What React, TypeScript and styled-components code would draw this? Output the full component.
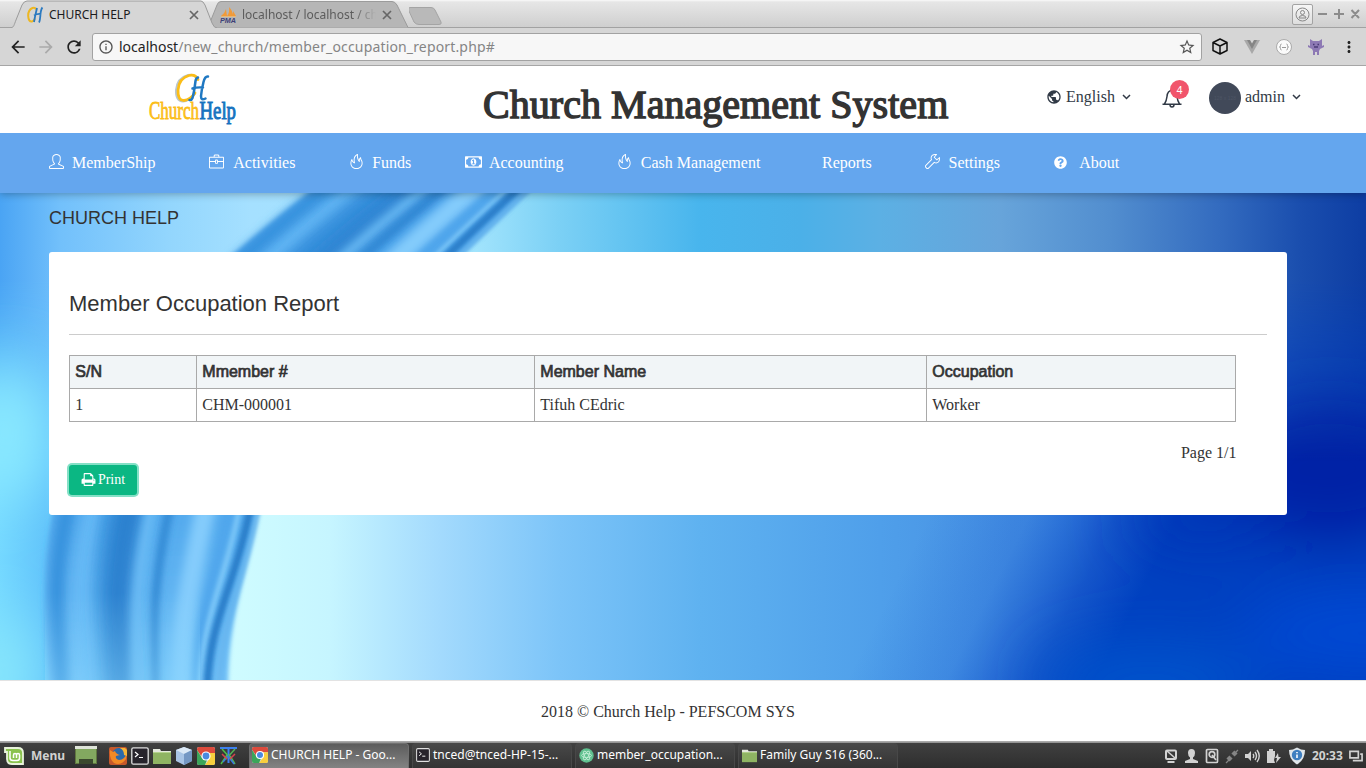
import React from "react";
import styled, { createGlobalStyle, css } from "styled-components";
import { SlFire, SlBriefcase, SlWrench, SlUser } from "react-icons/sl";
import { FaQuestionCircle } from "react-icons/fa";
import { MdPublic, MdArrowBack, MdArrowForward, MdRefresh, MdStarBorder, MdInfoOutline, MdMoreVert } from "react-icons/md";

const serif = `"Liberation Serif", "Times New Roman", serif`;
const sans = `"Liberation Sans", Arial, sans-serif`;
const ui = `"Noto Sans", sans-serif`;

const GlobalStyle = createGlobalStyle`
  * { box-sizing: border-box; }
  body { margin: 0; background: #fff; overflow: hidden; }
  svg { display: block; flex: none; }
`;

const Screen = styled.div`
  width: 1366px;
  height: 768px;
  display: flex;
  flex-direction: column;
  overflow: hidden;
  color: #313a46;
  font: 16px/24px ${serif};
`;

/* ---------- browser window ---------- */

const TabStrip = styled.div`
  height: 28px;
  display: flex;
  padding-left: 11px;
  background: linear-gradient(#fafafa 0, #e6e6e6 2px, #cfcfcf 27px, #a2a2a2 27px);
  font: 12px/16px ${ui};
`;

const Tab = styled.div<{ $active?: boolean }>`
  display: grid;
  width: ${(p) => (p.$active ? 206 : 201)}px;
  height: 28px;
  margin-left: ${(p) => (p.$active ? 0 : -9)}px;
  z-index: ${(p) => (p.$active ? 1 : 0)};
  color: ${(p) => (p.$active ? "#1c1c1c" : "#5c5c5c")};
  > * {
    grid-area: 1 / 1;
  }
`;

const TabContent = styled.div<{ $left: number }>`
  display: flex;
  align-items: center;
  padding: 2px 0 0 ${(p) => p.$left}px;
`;

const TabLabel = styled.span<{ $fade?: boolean }>`
  width: 140px;
  margin-left: 5px;
  overflow: hidden;
  white-space: nowrap;
  ${(p) => p.$fade && css`mask-image: linear-gradient(90deg, #000 112px, transparent 134px);`}
`;

const WindowControls = styled.div`
  display: flex;
  align-items: center;
  gap: 5px;
  margin: 0 6px 0 auto;
`;

const ProfileButton = styled.div`
  width: 21px;
  height: 21px;
  border: 1px solid #a3a3a3;
  border-radius: 2px;
  background: linear-gradient(#f6f6f6, #dedede);
  display: grid;
  place-items: center;
`;

const Toolbar = styled.div`
  height: 38px;
  display: flex;
  align-items: center;
  padding: 0 8px 0 8px;
  background: #d6d6d6;
  border-bottom: 1px solid #a6a6a6;
  color: #222;
`;

const NavButtons = styled.div`
  display: flex;
  align-items: center;
  gap: 8px;
  width: 84px;
`;

const AddressBar = styled.div`
  width: 1110px;
  height: 28px;
  display: flex;
  align-items: center;
  padding: 0 5px;
  background: #f7f7f7;
  border: 1px solid #a2a2a2;
  border-radius: 3px;
  font: 14px/20px ${ui};
  color: #222;
`;

const Url = styled.span`
  flex: 1;
  margin-left: 5px;
`;

const UrlPath = styled.span`
  color: #858585;
  letter-spacing: 0.155px;
`;

const Extensions = styled.div`
  display: flex;
  align-items: center;
  gap: 16px;
  margin-left: 10px;
`;

/* ---------- page ---------- */

const Header = styled.header`
  height: 67px;
  display: flex;
  background: #fff;
  color: #313a46;
`;

const LogoBox = styled.div`
  width: 483px;
  padding: 6px 0 0 147px;
`;

const Brand = styled.h1`
  width: 563px;
  margin: 0;
  padding-top: 13px;
  font: 400 40px/52px ${serif};
  letter-spacing: 0.04px;
  color: #333;
  -webkit-text-stroke: 1.4px #333;
  white-space: nowrap;
`;

const HeaderItem = styled.div<{ $w: number; $gap?: number }>`
  width: ${(p) => p.$w}px;
  height: 62px;
  display: flex;
  align-items: center;
  gap: ${(p) => p.$gap ?? 4}px;
  white-space: nowrap;
`;

const BellBox = styled.div`
  display: grid;
  width: 30px;
  height: 34px;
  > * {
    grid-area: 1 / 1;
  }
`;

const Badge = styled.span`
  width: 19px;
  height: 19px;
  margin: 0 0 0 8px;
  border-radius: 50%;
  background: #f1556c;
  color: #fff;
  text-align: center;
  font: 11px/20px ${sans};
`;

const Avatar = styled.div`
  width: 32px;
  height: 32px;
  margin-top: 2px;
  border-radius: 50%;
  background: #414959;
  color: #4d5565;
  text-align: center;
  font: 5px/33px ${sans};
`;

const NavBar = styled.nav`
  height: 60px;
  display: flex;
  gap: 53.7px;
  padding-left: 49px;
  background: #64a6ee;
  color: #fff;
  box-shadow: 0 1px 8px rgba(0, 0, 0, 0.3);
  clip-path: inset(0 0 -14px 0);
  z-index: 1;
`;

const NavItem = styled.a`
  height: 59px;
  display: flex;
  align-items: center;
  white-space: nowrap;
`;

const NavIcon = styled.span<{ $w: number; $solid?: boolean }>`
  width: ${(p) => p.$w}px;
  margin-top: ${(p) => (p.$solid ? -1 : -3)}px;
`;

const Stage = styled.main`
  height: 487px;
  display: grid;
  overflow: hidden;
  > * {
    grid-area: 1 / 1;
  }
`;

const StageContent = styled.div`
  padding: 13px 79px 0 49px;
  z-index: 0;
`;

const PageTitle = styled.h4`
  margin: 0 0 22px;
  font: 400 18px/24px ${sans};
  color: #333;
`;

const Card = styled.section`
  height: 263px;
  padding: 36px 20px 0;
  background: #fff;
  border-radius: 3px;
`;

const CardTitle = styled.h3`
  margin: 0;
  height: 47px;
  font: 400 22px/31px ${sans};
  color: #333;
  border-bottom: 1px solid #ccc;
`;

const Report = styled.div`
  width: 1167px;
  padding-top: 20px;
`;

const Table = styled.table`
  width: 1167px;
  table-layout: fixed;
  border-collapse: collapse;
  color: #333;
  th,
  td {
    height: 33px;
    padding: 0 5.3px;
    border: 1px solid #a9a9a9;
    text-align: left;
    line-height: 24px;
  }
  th {
    background: #f1f5f7;
    font: 400 16px/24px ${sans};
    -webkit-text-stroke: 0.7px #333;
  }
`;

const PageCount = styled.div`
  margin: 19px -0.5px 0 0;
  text-align: right;
  color: #333;
`;

const PrintButton = styled.button`
  width: 68px;
  height: 30px;
  padding: 0 0 1px;
  display: flex;
  align-items: center;
  justify-content: center;
  gap: 2px;
  border: 0;
  border-radius: 3px;
  background: #0bb783;
  box-shadow: 0 0 0 2px #84e0c6;
  color: #fff;
  font: 14px/21px ${serif};
`;

const Footer = styled.footer`
  height: 61px;
  border-top: 1px solid #e3e3e3;
  padding: 19px 30px 0 0;
  text-align: center;
  background: #fff;
  color: #333;
`;

/* ---------- desktop panel ---------- */

const Panel = styled.div`
  height: 27px;
  display: flex;
  padding: 2px 0 0 4px;
  background: linear-gradient(#9f9f9f 0, #b4b4b4 1px, #777 2px, #404040 2px, #2e2e2e 100%);
  font: 12px/16px ${ui};
  color: #fff;
`;

const PanelGroup = styled.div<{ $gap: number; $w?: number }>`
  display: flex;
  align-items: center;
  gap: ${(p) => p.$gap}px;
  ${(p) => p.$w && css`width: ${p.$w}px;`}
`;

const MenuLabel = styled.span`
  width: 38px;
  margin-left: 1px;
  font-weight: 700;
  color: #d2d2d2;
`;

const Task = styled.div<{ $active?: boolean }>`
  width: 160px;
  height: 25px;
  display: flex;
  align-items: center;
  gap: 3px;
  padding: 0 0 2px ${(p) => (p.$active ? 2 : 3)}px;
  border: 1px solid ${(p) => (p.$active ? "#707070" : "#484848")};
  border-bottom: 0;
  border-radius: 4px 4px 0 0;
  background: ${(p) => (p.$active ? "linear-gradient(#5c5c5c, #838383)" : "linear-gradient(#484848, #343434)")};
  white-space: nowrap;
`;

const Tray = styled.div`
  display: flex;
  align-items: center;
  gap: 6px;
  margin: 0 3px 0 auto;
  color: #d2d2d2;
`;

const Clock = styled.span`
  width: 31px;
  font-weight: 700;
  white-space: nowrap;
`;

/* ---------- drawings ---------- */

const TabShape = ({ active }: { active?: boolean }) => (
  <svg width={active ? 206 : 201} height="28">
    {active ? (
      <path d="M0 28C3 27 3 25 5 20L11 5Q13 1 16 1H190Q192 1 194 5L201 23Q203 28 206 28" fill="#d6d6d6" stroke="#9b9b9b" />
    ) : (
      <path d="M0 27.5L9 5Q10 1.500 13 1.500H184Q187 1.500 189 5L200 27.500" fill="#b6b6b6" stroke="#9b9b9b" />
    )}
  </svg>
);

const CloseIcon = () => (
  <svg width="10" height="10" viewBox="0 0 10 10">
    <path d="M1 1L9 9M9 1L1 9" stroke="#666" strokeWidth="1.700" />
  </svg>
);

const Favicon = () => (
  <svg width="17" height="18" viewBox="0 0 17 18" fill="none">
    <path d="M9 3.500Q8 1 5.500 2Q1 4 1.200 10Q1.500 16 5 15.500Q7 15 8 12.500" stroke="#edb722" strokeWidth="2" />
    <path d="M10 2Q8 10 7 16M15.500 1.500Q14 3 13.500 8Q13 15 12 16.500M7 9.500Q10 7.500 14 8" stroke="#2a79c0" strokeWidth="1.800" />
  </svg>
);

const PmaIcon = () => (
  <svg width="17" height="16" viewBox="0 0 17 16">
    <path d="M1 9Q5 6 6 2L7 9ZM7 9Q10 5 9 0Q13 4 13 9ZM13 4L16 9H13Z" fill="#f19a38" />
    <path d="M1 9.500H16" stroke="#e7b87a" />
    <text x="0" y="15.500" fontSize="6.500" fontWeight="700" fontStyle="italic" fontFamily="Liberation Sans" textLength="16" lengthAdjust="spacingAndGlyphs" fill="#3d4078">PMA</text>
  </svg>
);

const ChurchLogo = () => (
  <svg width="92" height="56" viewBox="147 72 92 56" overflow="visible" fontFamily="Liberation Serif">
    <g fill="none" strokeLinecap="round">
      <path d="M197 79Q194 73.500 188 75Q177 78 176 90Q175.500 101 183 101.500Q189 101.500 195 94" stroke="#b9c6cf" strokeWidth="2" />
      <path d="M198 79.500Q195.500 74 189 75.500Q179 78 178 90Q177.500 100.500 184 100.500Q190 100 195 93" stroke="#fbbd17" strokeWidth="2.800" />
      <path d="M198 77.500Q196 78 195.500 81Q194 93 192.500 98Q191.500 100.500 189.500 100M208 76.500Q205 76 203.500 82Q201.500 90 201 96Q201 101 205.500 98.500M192.500 88.500Q197 87 203 87.500" stroke="#1f78c2" strokeWidth="2.500" />
    </g>
    <g fontSize="25">
      <text x="149" y="119" textLength="50" lengthAdjust="spacingAndGlyphs" fill="#fbbd17" stroke="#fbbd17" strokeWidth=".8">Church</text>
      <text x="199.500" y="118.500" textLength="36.500" lengthAdjust="spacingAndGlyphs" fill="#1673c0" stroke="#1673c0" strokeWidth="1">Help</text>
    </g>
  </svg>
);

const Chevron = () => (
  <svg width="9" height="6" viewBox="0 0 9 6">
    <path d="M1 1L4.500 4.500L8 1" fill="none" stroke="#313a46" strokeWidth="1.500" />
  </svg>
);

const BellIcon = () => (
  <svg width="20" height="22" viewBox="0 0 20 22" fill="none" stroke="#313a46" strokeWidth="1.500">
    <path d="M.500 17.200H19.500M2.500 17Q4.500 14 5 9.500Q5.500 3.500 10 3.500Q14.500 3.500 15 9.500Q15.500 14 17.500 17M8 17.500Q8 20 10 20Q12 20 12 17.500M10 1.500V3.500" />
  </svg>
);

const MoneyIcon = () => (
  <svg width="17" height="16" viewBox="0 0 1920 1792" fill="#fff">
    <path d="M768 1152h384v-96h-128v-448h-114l-148 137 77 80q42-37 55-57h2v288h-128v96zm512-256q0 70-21 142t-59.500 134-101.500 101-138 39-138-39-101.500-101-59.500-134-21-142 21-142 59.500-134 101.500-101 138-39 138 39 101.500 101 59.500 134 21 142zm512 256v-512q-106 0-181-75t-75-181h-1152q0 106-75 181t-181 75v512q106 0 181 75t75 181h1152q0-106 75-181t181-75zm128-832v1152q0 26-19 45t-45 19h-1792q-26 0-45-19t-19-45v-1152q0-26 19-45t45-19h1792q26 0 45 19t19 45z" />
  </svg>
);

const PrintIcon = () => (
  <svg width="15" height="15" viewBox="0 0 1792 1792" fill="#fff">
    <path d="M448 1536h896v-256h-896v256zm0-640h896v-384h-160q-40 0-68-28t-28-68v-160h-640v640zm1152 64q0-26-19-45t-45-19-45 19-19 45 19 45 45 19 45-19 19-45zm128 0v416q0 13-9.500 22.500t-22.500 9.500h-224v160q0 40-28 68t-68 28h-960q-40 0-68-28t-28-68v-160h-224q-13 0-22.500-9.500t-9.500-22.500v-416q0-79 56.500-135.500t135.500-56.500h64v-544q0-40 28-68t68-28h672q40 0 88 20t76 48l152 152q28 28 48 76t20 88v256h64q79 0 135.500 56.500t56.500 135.500z" />
  </svg>
);

const stops = (list: [number, string][]) =>
  list.map(([x, c], i) => <stop key={i} offset={x / 1366} stopColor={c} />);

/* curve through x at the top, at the lower edge of the card and at the bottom */
const curve = (top: number, mid: number, low: number, dx: number) =>
  `M${top} -30C${top - dx} 118 ${mid + 17} 240 ${mid} 322S${low - 2} 430 ${low} 520`;

const ribbons: { at: [number, number, number, number]; c: string; w: number; blur: number; o?: number }[] = [
  { at: [362, 66, 62, 205], c: "#3793de", w: 16, blur: 5 },
  { at: [390, 92, 90, 205], c: "#6bbdf8", w: 12, blur: 6 },
  { at: [425, 122, 118, 200], c: "#2f88d6", w: 30, blur: 9, o: 0.8 },
  { at: [456, 130, 124, 200], c: "#2173c4", w: 22, blur: 9, o: 0.7 },
  { at: [458, 150, 138, 195], c: "#6fc0f8", w: 9, blur: 5 },
  { at: [476, 168, 156, 190], c: "#2f86d2", w: 9, blur: 3, o: 0.85 },
  { at: [506, 204, 182, 180], c: "#84ccfc", w: 20, blur: 5 },
  { at: [528, 228, 196, 172], c: "#4fa6ec", w: 9, blur: 3 },
  { at: [537, 238, 200, 168], c: "#83ccfa", w: 4, blur: 2 },
  { at: [547, 249, 207, 164], c: "#2b7fca", w: 8, blur: 2 },
  { at: [557, 257, 219, 161], c: "#69b6ee", w: 4, blur: 2 },
];

const Backdrop = () => (
  <svg width="1366" height="488" viewBox="0 0 1366 488">
    <defs>
      <linearGradient id="low">
        {stops([[0, "#74d8ff"], [45, "#62c4fb"], [230, "#cffcff"], [330, "#c6f5ff"], [440, "#a3dafd"], [560, "#7cc4f8"], [700, "#5fb2f0"], [880, "#4f9fea"], [1010, "#4790e2"], [1366, "#3f86de"]])}
      </linearGradient>
      <linearGradient id="high">
        {stops([[0, "#4aa4f4"], [60, "#72c0fb"], [170, "#93d6fd"], [250, "#a5e0ff"], [470, "#a4e5fd"], [560, "#7bd0f5"], [700, "#48b5ed"], [800, "#4bb0e8"], [880, "#5cb0e4"], [1000, "#67a4da"], [1110, "#528ecf"], [1220, "#336bbf"], [1300, "#1a4eae"], [1366, "#0d3da3"]])}
      </linearGradient>
      <linearGradient id="night" gradientUnits="userSpaceOnUse" x1="925" y1="330" x2="1125" y2="430">
        <stop offset="0" stopColor="#0a4fce" stopOpacity="0" />
        <stop offset=".4" stopColor="#0a4fce" stopOpacity=".2" />
        <stop offset=".75" stopColor="#0747c4" stopOpacity=".78" />
        <stop offset="1" stopColor="#0040c0" />
      </linearGradient>
      <linearGradient id="fade" x2="0" y2="1">
        <stop offset=".18" stopColor="#fff" />
        <stop offset=".55" stopColor="#000" />
      </linearGradient>
      <linearGradient id="ribbon" x2="0" y2="1">
        <stop offset="0" stopColor="#4a9fe8" />
        <stop offset=".65" stopColor="#55abee" />
        <stop offset="1" stopColor="#73c2f8" />
      </linearGradient>
      <linearGradient id="haze" x2="0" y2="1">
        <stop offset=".82" stopColor="#8fdcff" stopOpacity="0" />
        <stop offset="1" stopColor="#8fdcff" stopOpacity=".4" />
      </linearGradient>
      <mask id="top"><rect width="1366" height="488" fill="url(#fade)" /></mask>
      {[2, 3, 5, 6, 9, 30].map((n) => (
        <filter key={n} id={`soft${n}`} x="-50%" y="-50%" width="200%" height="200%">
          <feGaussianBlur stdDeviation={n} />
        </filter>
      ))}
    </defs>
    <rect width="1366" height="488" fill="url(#low)" />
    <rect width="1366" height="488" fill="url(#night)" />
    <g filter="url(#soft30)">
      <ellipse cx="1330" cy="275" rx="110" ry="80" fill="#0020a6" />
      <ellipse cx="1200" cy="325" rx="70" ry="30" fill="#0034b6" />
      <ellipse cx="1370" cy="440" rx="130" ry="40" fill="#004ad4" />
      <ellipse cx="1150" cy="490" rx="110" ry="40" fill="#0052cc" />
    </g>
    <rect width="1366" height="488" fill="url(#high)" mask="url(#top)" />
    <g filter="url(#soft30)">
      <ellipse cx="5" cy="240" rx="45" ry="70" fill="#8cebff" />
      <ellipse cx="0" cy="480" rx="35" ry="60" fill="#8ae8fb" />
    </g>
    <path
      d="M560 -30C400 118 275 240 258 322S226 430 228 520L52 520Q38 400 52 322C90 210 160 105 350 -30Z"
      fill="url(#ribbon)"
      filter="url(#soft2)"
    />
    {ribbons.map((r, i) => (
      <path key={i} d={curve(...r.at)} fill="none" stroke={r.c} strokeWidth={r.w} opacity={r.o} filter={`url(#soft${r.blur})`} />
    ))}
    <rect x="45" width="155" height="488" fill="url(#haze)" />
  </svg>
);

const ChromeIcon = ({ s = 18 }: { s?: number }) => (
  <svg width={s} height={s} viewBox="0 0 18 18">
    <rect width="18" height="18" rx="2" fill="#ddd" />
    <path d="M0 2Q0 0 2 0H16Q18 0 18 2V6H9L5 10L0 3Z" fill="#dc4a3c" />
    <path d="M18 6V16Q18 18 16 18H8L13 11V6Z" fill="#f8cf3e" />
    <path d="M0 3L5 11L10 13L8 18H2Q0 18 0 16Z" fill="#3ba55a" />
    <circle cx="9" cy="9" r="4.600" fill="#fff" />
    <circle cx="9" cy="9" r="3.400" fill="#4a8ae0" />
  </svg>
);

const TerminalIcon = ({ s = 18 }: { s?: number }) => (
  <svg width={s} height={s} viewBox="0 0 18 18">
    <rect x=".8" y=".8" width="16.400" height="16.400" rx="1.500" fill="#26232b" stroke="#e0e0e0" strokeWidth="1.300" />
    <path d="M4 5L7 7.500L4 10M8 10.500H12" fill="none" stroke="#fff" strokeWidth="1.200" />
  </svg>
);

const FolderIcon = ({ s = 18 }: { s?: number }) => (
  <svg width={s} height={s} viewBox="0 0 18 18">
    <path d="M0 2H7L8 4H18V8H0Z" fill="#e4e8dd" />
    <rect y="5" width="18" height="12" fill="#8fb463" />
    <path d="M0 5.500H18" stroke="#b4d28e" />
  </svg>
);

const MintIcon = () => (
  <svg width="20" height="20" viewBox="0 0 20 20">
    <path d="M1 2H14Q19 2 19 7V18H8Q3 18 3 13V6H1Z" fill="#8bc34f" stroke="#e9f3dc" strokeWidth="1.800" />
    <path d="M6 5V12Q6 14.500 9 14.500H13Q15.500 14.500 15.500 12V9Q15.500 7.500 14 7.500T12.500 9V12M12.500 9Q12.500 7.500 11 7.500T9.500 9V12" fill="none" stroke="#fff" strokeWidth="1.500" />
  </svg>
);

const DesktopIcon = () => (
  <svg width="22" height="19" viewBox="0 0 22 19">
    <rect x=".5" y=".5" width="21" height="17" fill="#83a860" stroke="#60783f" />
    <rect width="22" height="3" fill="#dfe4da" />
    <rect x="4" y="13" width="14" height="5" fill="#3b482d" />
  </svg>
);

const FirefoxIcon = () => (
  <svg width="18" height="18" viewBox="0 0 18 18">
    <rect width="18" height="18" rx="2" fill="#c6582b" />
    <circle cx="10" cy="8" r="7" fill="#2a6aab" />
    <path d="M1 3Q0 12 5 16Q12 19 17 12L18 5Q16 13 10 13Q6 12 7 9L11 8Q7 7 6 4L4 5Z" fill="#f18a26" />
    <path d="M11 1Q15 3 15 8L18 9V3L16 1Z" fill="#f5b63a" />
  </svg>
);

const CubeIcon = () => (
  <svg width="18" height="18" viewBox="0 0 18 18">
    <path d="M9 0L17 3V14L9 18L1 14V3Z" fill="#a9c5e6" />
    <path d="M9 0L17 3L9 7L1 3Z" fill="#dce9f6" />
    <path d="M9 7L17 3V14L9 18Z" fill="#7598c4" />
  </svg>
);

const CrossIcon = () => (
  <svg width="19" height="20" viewBox="0 0 19 20" fill="none" strokeWidth="1.500">
    <path d="M1 2H18M9.500 2V17" stroke="#3d80f0" strokeWidth="2" />
    <path d="M3 3L12 13M8 9L2 18" stroke="#4ec04a" />
    <path d="M16 3L7 13M11 10L16 18" stroke="#52b356" />
    <path d="M4 16L9 10L15 18" stroke="#3b79e0" />
    <path d="M3 8L8 13M16 8L11 13" stroke="#d7434e" />
  </svg>
);

const AtomIcon = () => (
  <svg width="15" height="15" viewBox="0 0 15 15">
    <circle cx="7.500" cy="7.500" r="7.200" fill="#5fc08f" />
    <g fill="none" stroke="#c7efd9" strokeWidth=".8">
      <ellipse cx="7.500" cy="7.500" rx="5" ry="2" />
      <ellipse cx="7.500" cy="7.500" rx="5" ry="2" transform="rotate(60 7.500 7.500)" />
      <ellipse cx="7.500" cy="7.500" rx="5" ry="2" transform="rotate(120 7.500 7.500)" />
    </g>
  </svg>
);

const TrayIcons = () => (
  <>
    <svg width="14" height="16" viewBox="0 0 14 16" fill="none" stroke="#d2d2d2" strokeWidth="2">
      <rect x="2" y="2.500" width="10" height="8.500" rx="1" />
      <path d="M3 3L11 10" strokeWidth="1.600" />
      <path d="M3.500 14H10.500" />
    </svg>
    <svg width="15" height="16" viewBox="0 0 15 16" fill="#d2d2d2">
      <path d="M7.500 1Q11 1 11 5Q11 8 9 9.500V11L14 13V15H1V13L6 11V9.500Q4 8 4 5Q4 1 7.500 1Z" />
    </svg>
    <svg width="14" height="16" viewBox="0 0 14 16" fill="none" stroke="#d2d2d2" strokeWidth="1.700">
      <rect x="1.500" y="1.500" width="11" height="13" rx="1" />
      <circle cx="7" cy="6.500" r="2.800" />
      <path d="M7 7L11 12" />
    </svg>
    <svg width="14" height="16" viewBox="0 0 14 16" fill="none" stroke="#858585">
      <path d="M1 15L4 12M10 5L13 2" strokeWidth="1.300" />
      <path d="M3 12L6 9M8 7L11 4" strokeWidth="4.500" />
    </svg>
    <svg width="15" height="16" viewBox="0 0 15 16" fill="none" stroke="#d2d2d2" strokeWidth="1.400">
      <path d="M0 6H3L6 3V13L3 10H0Z" fill="#d2d2d2" stroke="none" />
      <path d="M8 6Q9.500 8 8 10M10 4Q13 8 10 12M12 2Q16.500 8 12 14" />
    </svg>
    <svg width="16" height="16" viewBox="0 0 16 16" fill="#d2d2d2">
      <path d="M3 1H7V3H9V8L8 12L9 15H1V3H3Z" />
      <path d="M12 5L9 10H11L10 15L15 9H12.500Z" />
    </svg>
    <svg width="18" height="18" viewBox="0 0 18 18">
      <path d="M9 .5Q13 3 17 3Q17 13 9 17.500Q1 13 1 3Q5 3 9 .5Z" fill="#e0e6ea" />
      <circle cx="9" cy="8" r="5.200" fill="#3f7fc0" />
      <path d="M9 5V6.200M9 7.500V11" stroke="#fff" strokeWidth="1.600" />
    </svg>
  </>
);

const menu: { label: string; icon?: React.ReactNode; w: number; solid?: boolean }[] = [
  { label: "MemberShip", icon: <SlUser size={15} />, w: 23 },
  { label: "Activities", icon: <SlBriefcase size={15} />, w: 24 },
  { label: "Funds", icon: <SlFire size={15} />, w: 23 },
  { label: "Accounting", icon: <MoneyIcon />, w: 24, solid: true },
  { label: "Cash Management", icon: <SlFire size={15} />, w: 23.5 },
  { label: "Reports", w: 8 },
  { label: "Settings", icon: <SlWrench size={15} />, w: 23 },
  { label: "About", icon: <FaQuestionCircle size={13} />, w: 25.5, solid: true },
];

export default function App() {
  return (
    <Screen>
      <GlobalStyle />
      <TabStrip>
        <Tab $active>
          <TabShape active />
          <TabContent $left={16}>
            <Favicon />
            <TabLabel>CHURCH HELP</TabLabel>
            <CloseIcon />
          </TabContent>
        </Tab>
        <Tab>
          <TabShape />
          <TabContent $left={12}>
            <PmaIcon />
            <TabLabel $fade>localhost / localhost / ch</TabLabel>
            <CloseIcon />
          </TabContent>
        </Tab>
        <svg width="36" height="28" viewBox="408 0 36 28">
          <path d="M409 7.500H430Q433 7.500 434 10L440 22Q441 24.500 438 24.500H418Q415 24.500 413 22L407.500 10Q407 7.500 409 7.500Z" fill="#b9b9b9" stroke="#a4a4a4" />
        </svg>
        <WindowControls>
          <ProfileButton>
            <svg width="15" height="15" viewBox="0 0 15 15" fill="none" stroke="#888">
              <circle cx="7.500" cy="7.500" r="6.500" />
              <circle cx="7.500" cy="5.500" r="2" />
              <path d="M4 11Q4 8.500 7.500 8.500T11 11Z" />
            </svg>
          </ProfileButton>
          <svg width="42" height="12" viewBox="0 0 42 12" stroke="#8c8c8c" strokeWidth="2">
            <path d="M0 6H9M16 6H26M21 1V11M33.500 2L41 10M41 2L33.500 10" />
          </svg>
        </WindowControls>
      </TabStrip>
      <Toolbar>
        <NavButtons>
          <MdArrowBack size={20} />
          <MdArrowForward size={20} color="#aaa" />
          <MdRefresh size={20} />
        </NavButtons>
        <AddressBar>
          <MdInfoOutline size={16} color="#555" />
          <Url>
            localhost<UrlPath>/new_church/member_occupation_report.php#</UrlPath>
          </Url>
          <MdStarBorder size={18} color="#555" />
        </AddressBar>
        <Extensions>
          <svg width="16" height="17" viewBox="0 0 16 17" fill="none" stroke="#111" strokeWidth="1.500" strokeLinejoin="round">
            <path d="M8 1L15 4.500V12.500L8 16L1 12.500V4.500ZM1 4.500L8 8L15 4.500M8 8V16" />
          </svg>
          <svg width="16" height="14" viewBox="0 0 16 14">
            <path d="M0 0H4L8 7L12 0H16L8 14Z" fill="#a8a8a8" />
            <path d="M3 0H6L8 3.500L10 0H13L8 9Z" fill="#858585" />
          </svg>
          <svg width="16" height="16" viewBox="0 0 16 16">
            <circle cx="8" cy="8" r="7.500" fill="#fafafa" stroke="#aaa" />
            <path d="M5.500 5Q4.500 5 4.500 6.500T3.500 8Q4.500 8 4.500 9.500T5.500 11M10.500 5Q11.500 5 11.500 6.500T12.500 8Q11.500 8 11.500 9.500T10.500 11M6 8.500H10" fill="none" stroke="#999" />
          </svg>
          <svg width="16" height="16" viewBox="0 0 16 16">
            <path d="M2 0L5 2H11L14 0V7L16 6V8L12 10L11 12V16H9V13H7V16H5V12L4 10L0 8V6L2 7Z" fill="#8d79b4" />
            <path d="M5 5.500H6.500M9.500 5.500H11M6 8H10" stroke="#4a3a75" strokeWidth="1.300" />
          </svg>
          <MdMoreVert size={18} color="#222" />
        </Extensions>
      </Toolbar>

      <Header>
        <LogoBox>
          <ChurchLogo />
        </LogoBox>
        <Brand>Church Management System</Brand>
        <HeaderItem $w={116}>
          <MdPublic size={16} />
          English
          <HeaderItem as="span" $w={16} $gap={0}>
            <svg width="3" height="1" />
            <Chevron />
          </HeaderItem>
        </HeaderItem>
        <HeaderItem $w={47}>
          <BellBox>
            <svg width="30" height="34" viewBox="0 0 30 34">
              <g transform="translate(0 7)">
                <BellIcon />
              </g>
            </svg>
            <Badge>4</Badge>
          </BellBox>
        </HeaderItem>
        <HeaderItem $w={150}>
          <Avatar>128 x 128</Avatar>
          admin
          <HeaderItem as="span" $w={16} $gap={0}>
            <svg width="3" height="1" />
            <Chevron />
          </HeaderItem>
        </HeaderItem>
      </Header>

      <NavBar>
        {menu.map((m) => (
          <NavItem key={m.label}>
            <NavIcon $w={m.w} $solid={m.solid}>{m.icon}</NavIcon>
            {m.label}
          </NavItem>
        ))}
      </NavBar>

      <Stage>
        <Backdrop />
        <StageContent>
          <PageTitle>CHURCH HELP</PageTitle>
          <Card>
            <CardTitle>Member Occupation Report</CardTitle>
            <Report>
              <Table>
                <colgroup>
                  <col style={{ width: 127 }} />
                  <col style={{ width: 338 }} />
                  <col style={{ width: 392 }} />
                  <col />
                </colgroup>
                <thead>
                  <tr>
                    <th>S/N</th>
                    <th>Mmember #</th>
                    <th>Member Name</th>
                    <th>Occupation</th>
                  </tr>
                </thead>
                <tbody>
                  <tr>
                    <td>1</td>
                    <td>CHM-000001</td>
                    <td>Tifuh CEdric</td>
                    <td>Worker</td>
                  </tr>
                </tbody>
              </Table>
              <PageCount>Page 1/1</PageCount>
            </Report>
            <PrintButton>
              <PrintIcon />
              Print
            </PrintButton>
          </Card>
        </StageContent>
      </Stage>
      <Footer>2018 © Church Help - PEFSCOM SYS</Footer>

      <Panel>
        <PanelGroup $gap={6} $w={105}>
          <MintIcon />
          <MenuLabel>Menu</MenuLabel>
          <DesktopIcon />
        </PanelGroup>
        <PanelGroup $gap={4} $w={140}>
          <FirefoxIcon />
          <TerminalIcon />
          <FolderIcon />
          <CubeIcon />
          <ChromeIcon />
          <CrossIcon />
        </PanelGroup>
        <PanelGroup $gap={3}>
          <Task $active>
            <ChromeIcon s={16} />
            CHURCH HELP - Goo...
          </Task>
          <Task>
            <TerminalIcon s={14} />
            tnced@tnced-HP-15-...
          </Task>
          <Task>
            <AtomIcon />
            member_occupation...
          </Task>
          <Task>
            <FolderIcon s={15} />
            Family Guy S16 (360...
          </Task>
        </PanelGroup>
        <Tray>
          <TrayIcons />
          <Clock>20:33</Clock>
          <svg width="14" height="14" viewBox="0 0 15 14" fill="none" stroke="#d2d2d2" strokeWidth="1.800">
            <path d="M1 2H10V9H1ZM12 5H14V12H5V11" />
          </svg>
        </Tray>
      </Panel>
    </Screen>
  );
}
